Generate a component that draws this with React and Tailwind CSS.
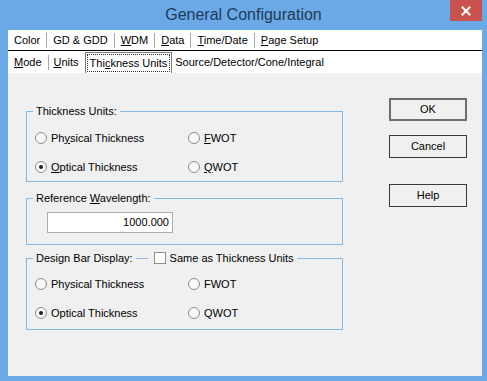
const BORDER = "border-[#86b7e6]";

function Radio({ checked, children }) {
  return (
    <div className="h-[20px] flex items-center">
      <span className="w-[12px] h-[12px] rounded-full border border-[#8c8c8c] bg-[#f8f8f8] flex items-center justify-center shrink-0">
        {checked && <span className="w-[4px] h-[4px] rounded-full bg-[#222]" />}
      </span>
      <span className="ml-[4px] whitespace-nowrap">{children}</span>
    </div>
  );
}

function Sep() {
  return <span className="w-px h-[15px] bg-[#a8a8a8]" />;
}

function Btn({ children, def, className = "" }) {
  return (
    <div
      className={
        "h-[23px] w-[78px] flex items-center justify-center bg-[#f0f0f0] " +
        (def ? "border-2 border-[#6e6e6e] " : "border border-[#3a3a3a] ") +
        className
      }
    >
      {children}
    </div>
  );
}

export default function App() {
  return (
    <div className="w-[487px] h-[381px] bg-[#6aa9e6] flex flex-col font-['Liberation_Sans',Arial,sans-serif] text-[11px] text-black overflow-hidden">
      <div className="h-[30px] relative flex items-center justify-center shrink-0">
        <span className="text-[16px] text-[#1f3a5a]">General Configuration</span>
        <div className="absolute right-[5px] top-0 w-[32px] h-[21px] bg-[#c9524e] flex items-center justify-center">
          <svg width="10" height="10" viewBox="0 0 10 10">
            <path d="M1.5 1.5 L8.5 8.5 M8.5 1.5 L1.5 8.5" stroke="white" strokeWidth="2" strokeLinecap="square" />
          </svg>
        </div>
      </div>
      <div className="flex-1 ml-[8px] mr-[5px] mb-[5px] flex flex-col bg-[#f0f0f0]">
        <div className="h-[21px] bg-white border-b border-black flex items-center pl-[6px] gap-[6px] shrink-0">
          <span>Color</span>
          <Sep />
          <span>GD &amp; GDD</span>
          <Sep />
          <span><u>W</u>DM</span>
          <Sep />
          <span><u>D</u>ata</span>
          <Sep />
          <span><u>T</u>ime/Date</span>
          <Sep />
          <span><u>P</u>age Setup</span>
        </div>
        <div className="h-[22px] bg-white flex items-center pl-[6px] shrink-0">
          <span><u>M</u>ode</span>
          <span className="ml-[6px] flex items-center"><Sep /></span>
          <span className="ml-[5px]"><u>U</u>nits</span>
          <div className="ml-[6px] self-stretch mt-[1px] border border-b-0 border-[#7a7a7a] p-[1px] flex">
            <div className="border border-dotted border-[#333] px-[2px] flex items-center">
              Thi<u>c</u>kness Units
            </div>
          </div>
          <span className="ml-[3px]">Source/Detector/Cone/Integral</span>
        </div>
        <div className="flex-1 flex pl-[18px]">
          <div className="w-[317px] flex flex-col pt-[32px]">
            <fieldset className={"border " + BORDER}>
              <legend className="ml-[6px] px-[3px] leading-[12px]">Thickness Units:</legend>
              <div className="grid grid-cols-[153px_1fr] gap-y-[9px] pt-[11px] pl-[8px] pb-[4px]">
                <Radio>Ph<u>y</u>sical Thickness</Radio>
                <Radio><u>F</u>WOT</Radio>
                <Radio checked><u>O</u>ptical Thickness</Radio>
                <Radio><u>Q</u>WOT</Radio>
              </div>
            </fieldset>
            <fieldset className={"mt-[10px] border " + BORDER}>
              <legend className="ml-[6px] px-[3px] leading-[12px]">Reference <u>W</u>avelength:</legend>
              <div className="pl-[20px] pb-[11px] pt-[8px]">
                <div className="w-[126px] h-[21px] border border-[#abadb3] bg-white flex items-center justify-end pr-[3px]">
                  1000.000
                </div>
              </div>
            </fieldset>
            <fieldset className={"mt-[7px] border " + BORDER}>
              <legend className="ml-[6px] px-[3px] leading-[12px]">
                <span className="flex items-center h-[12px]">
                  <span>Design Bar Display:</span>
                  <span className="ml-[3px] w-[12px] h-px bg-[#86b7e6]" />
                  <span className="ml-[6px] w-[12px] h-[12px] border border-[#8c8c8c] bg-white" />
                  <span className="ml-[4px]">Same as Thickness Units</span>
                </span>
              </legend>
              <div className="grid grid-cols-[153px_1fr] gap-y-[9px] pt-[10px] pl-[8px] pb-[6px]">
                <Radio>Physical Thickness</Radio>
                <Radio>FWOT</Radio>
                <Radio checked>Optical Thickness</Radio>
                <Radio>QWOT</Radio>
              </div>
            </fieldset>
          </div>
          <div className="ml-[46px] w-[78px] flex flex-col pt-[25px]">
            <Btn def>OK</Btn>
            <Btn className="mt-[14px]">Cancel</Btn>
            <Btn className="mt-[26px]">Help</Btn>
          </div>
        </div>
      </div>
    </div>
  );
}
